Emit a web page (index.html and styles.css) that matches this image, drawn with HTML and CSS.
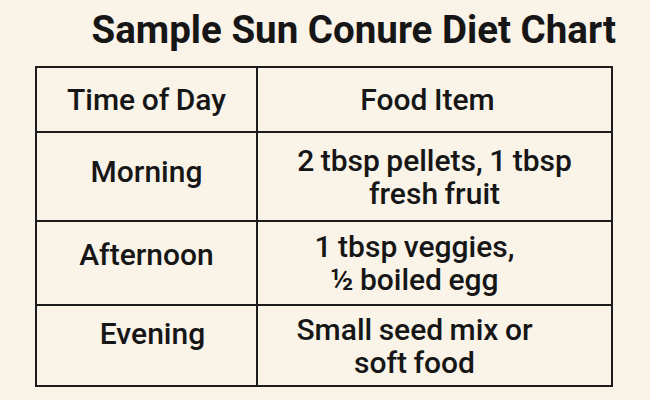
FILE: index.html
```html
<!DOCTYPE html>
<html lang="en">
<head>
<meta charset="utf-8">
<title>Sample Sun Conure Diet Chart</title>
<link rel="stylesheet" href="styles.css">
</head>
<body>
<div class="page">
  <h1 class="title">Sample Sun Conure Diet Chart</h1>
  <table class="chart">
    <tr class="head-row">
      <th class="col-time">Time of Day</th>
      <th class="col-food head-food">Food Item</th>
    </tr>
    <tr class="row row-morning">
      <td class="col-time lift-s">Morning</td>
      <td class="col-food">2 tbsp pellets, 1 tbsp<br>fresh fruit</td>
    </tr>
    <tr class="row row-afternoon">
      <td class="col-time lift-m">Afternoon</td>
      <td class="col-food shift">1 tbsp veggies,<br>½ boiled egg</td>
    </tr>
    <tr class="row row-evening">
      <td class="col-time lift-l">Evening</td>
      <td class="col-food shift">Small seed mix or<br>soft food</td>
    </tr>
  </table>
</div>
</body>
</html>
```
FILE: styles.css
```css
html, body {
  margin: 0;
  padding: 0;
  background: #f9f3e8;
}
body {
  width: 650px;
  height: 400px;
  overflow: hidden;
  font-family: Roboto, "Liberation Sans", sans-serif;
  color: #161616;
}
.page {
  margin-left: 35px;
  width: 578px;
  padding-top: 10px;
}
.title {
  margin: 0 -3px 0 0;
  height: 56px;
  text-align: right;
  font-size: 38.5px;
  font-weight: 700;
  line-height: 40px;
}
.chart {
  width: 578px;
  border-collapse: collapse;
  border: 2.5px solid #1c1c1c;
  table-layout: fixed;
}
.chart th, .chart td {
  box-sizing: border-box;
  border: 2px solid #1c1c1c;
  text-align: center;
  padding: 0;
  font-size: 30px;
  line-height: 33px;
  font-weight: 500;
  word-spacing: -1px;
}
.chart th {
  font-weight: 500;
}
.col-time { width: 221px; }
.head-row { height: 65px; }
.row-morning { height: 89px; }
.row-afternoon { height: 84px; }
.row-evening { height: 81px; }
.head-food { padding-right: 14px !important; }
.shift { padding-right: 40px !important; }
.lift-s { padding-bottom: 10px !important; }
.lift-m { padding-bottom: 18px !important; }
.lift-l { padding-bottom: 24px !important; padding-left: 12px !important; }
```
